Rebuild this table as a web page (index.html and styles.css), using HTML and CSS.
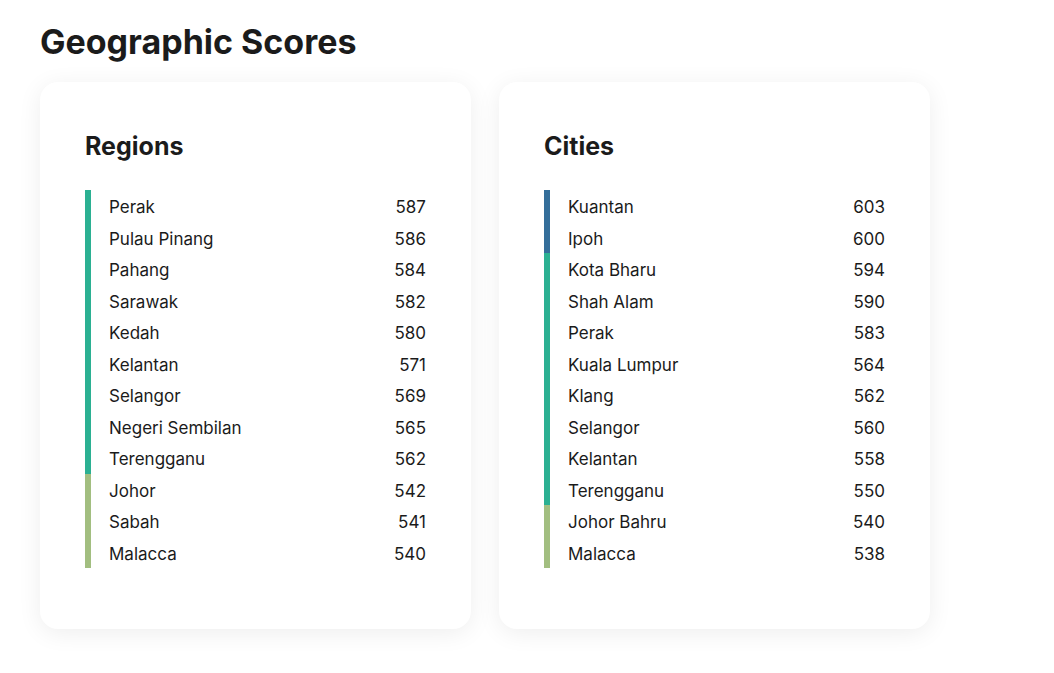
FILE: index.html
```html
<!DOCTYPE html>
<html lang="en">
<head>
  <meta charset="UTF-8" />
  <title>Geographic Scores</title>
  <link rel="stylesheet" href="styles.css">
</head>
<body>

<h1 class="page-title">Geographic Scores</h1>

<div class="cards">
  <!-- Regions -->
  <section class="card">
    <h2>Regions</h2>
    <ul class="score-list">
      <li class="top"><span>Perak</span><span>587</span></li>
      <li class="top"><span>Pulau Pinang</span><span>586</span></li>
      <li class="top"><span>Pahang</span><span>584</span></li>
      <li class="top"><span>Sarawak</span><span>582</span></li>
      <li class="top"><span>Kedah</span><span>580</span></li>
      <li class="top"><span>Kelantan</span><span>571</span></li>
      <li class="top"><span>Selangor</span><span>569</span></li>
      <li class="top"><span>Negeri Sembilan</span><span>565</span></li>
      <li class="top"><span>Terengganu</span><span>562</span></li>
      <li class="low"><span>Johor</span><span>542</span></li>
      <li class="low"><span>Sabah</span><span>541</span></li>
      <li class="low"><span>Malacca</span><span>540</span></li>
    </ul>
  </section>

  <!-- Cities -->
  <section class="card">
    <h2>Cities</h2>
    <ul class="score-list">
      <li class="best"><span>Kuantan</span><span>603</span></li>
      <li class="best"><span>Ipoh</span><span>600</span></li>
      <li class="top"><span>Kota Bharu</span><span>594</span></li>
      <li class="top"><span>Shah Alam</span><span>590</span></li>
      <li class="top"><span>Perak</span><span>583</span></li>
      <li class="top"><span>Kuala Lumpur</span><span>564</span></li>
      <li class="top"><span>Klang</span><span>562</span></li>
      <li class="top"><span>Selangor</span><span>560</span></li>
      <li class="top"><span>Kelantan</span><span>558</span></li>
      <li class="top"><span>Terengganu</span><span>550</span></li>
      <li class="low"><span>Johor Bahru</span><span>540</span></li>
      <li class="low"><span>Malacca</span><span>538</span></li>
    </ul>
  </section>
</div>

</body>
</html>
```

FILE: styles.css
```css
body { font-family: Inter, Lato, sans-serif; margin: 0; padding: 22px 40px; background: #fff; color: #1b1b1b; }
.page-title { font-size: 34px; font-weight: 700; margin: 0 0 20px; line-height: 40px; }
.cards { display: flex; gap: 28px; }
.card { width: 431px; box-sizing: border-box; padding: 49px 45px 61px; background: #fff; border-radius: 18px; box-shadow: 0 4px 24px rgba(0,0,0,0.07); }
.card h2 { font-size: 25px; font-weight: 700; margin: 0 0 29px; line-height: 30px; }
.score-list { list-style: none; margin: 0; padding: 0; }
.score-list li { display: flex; justify-content: space-between; font-size: 17px; line-height: 28.5px; padding: 3px 0 0 18px; border-left: 6px solid #2bb092; }
.score-list li.best { border-left-color: #346e9a; }
.score-list li.top { border-left-color: #2bb092; }
.score-list li.low { border-left-color: #a2be80; }
```
